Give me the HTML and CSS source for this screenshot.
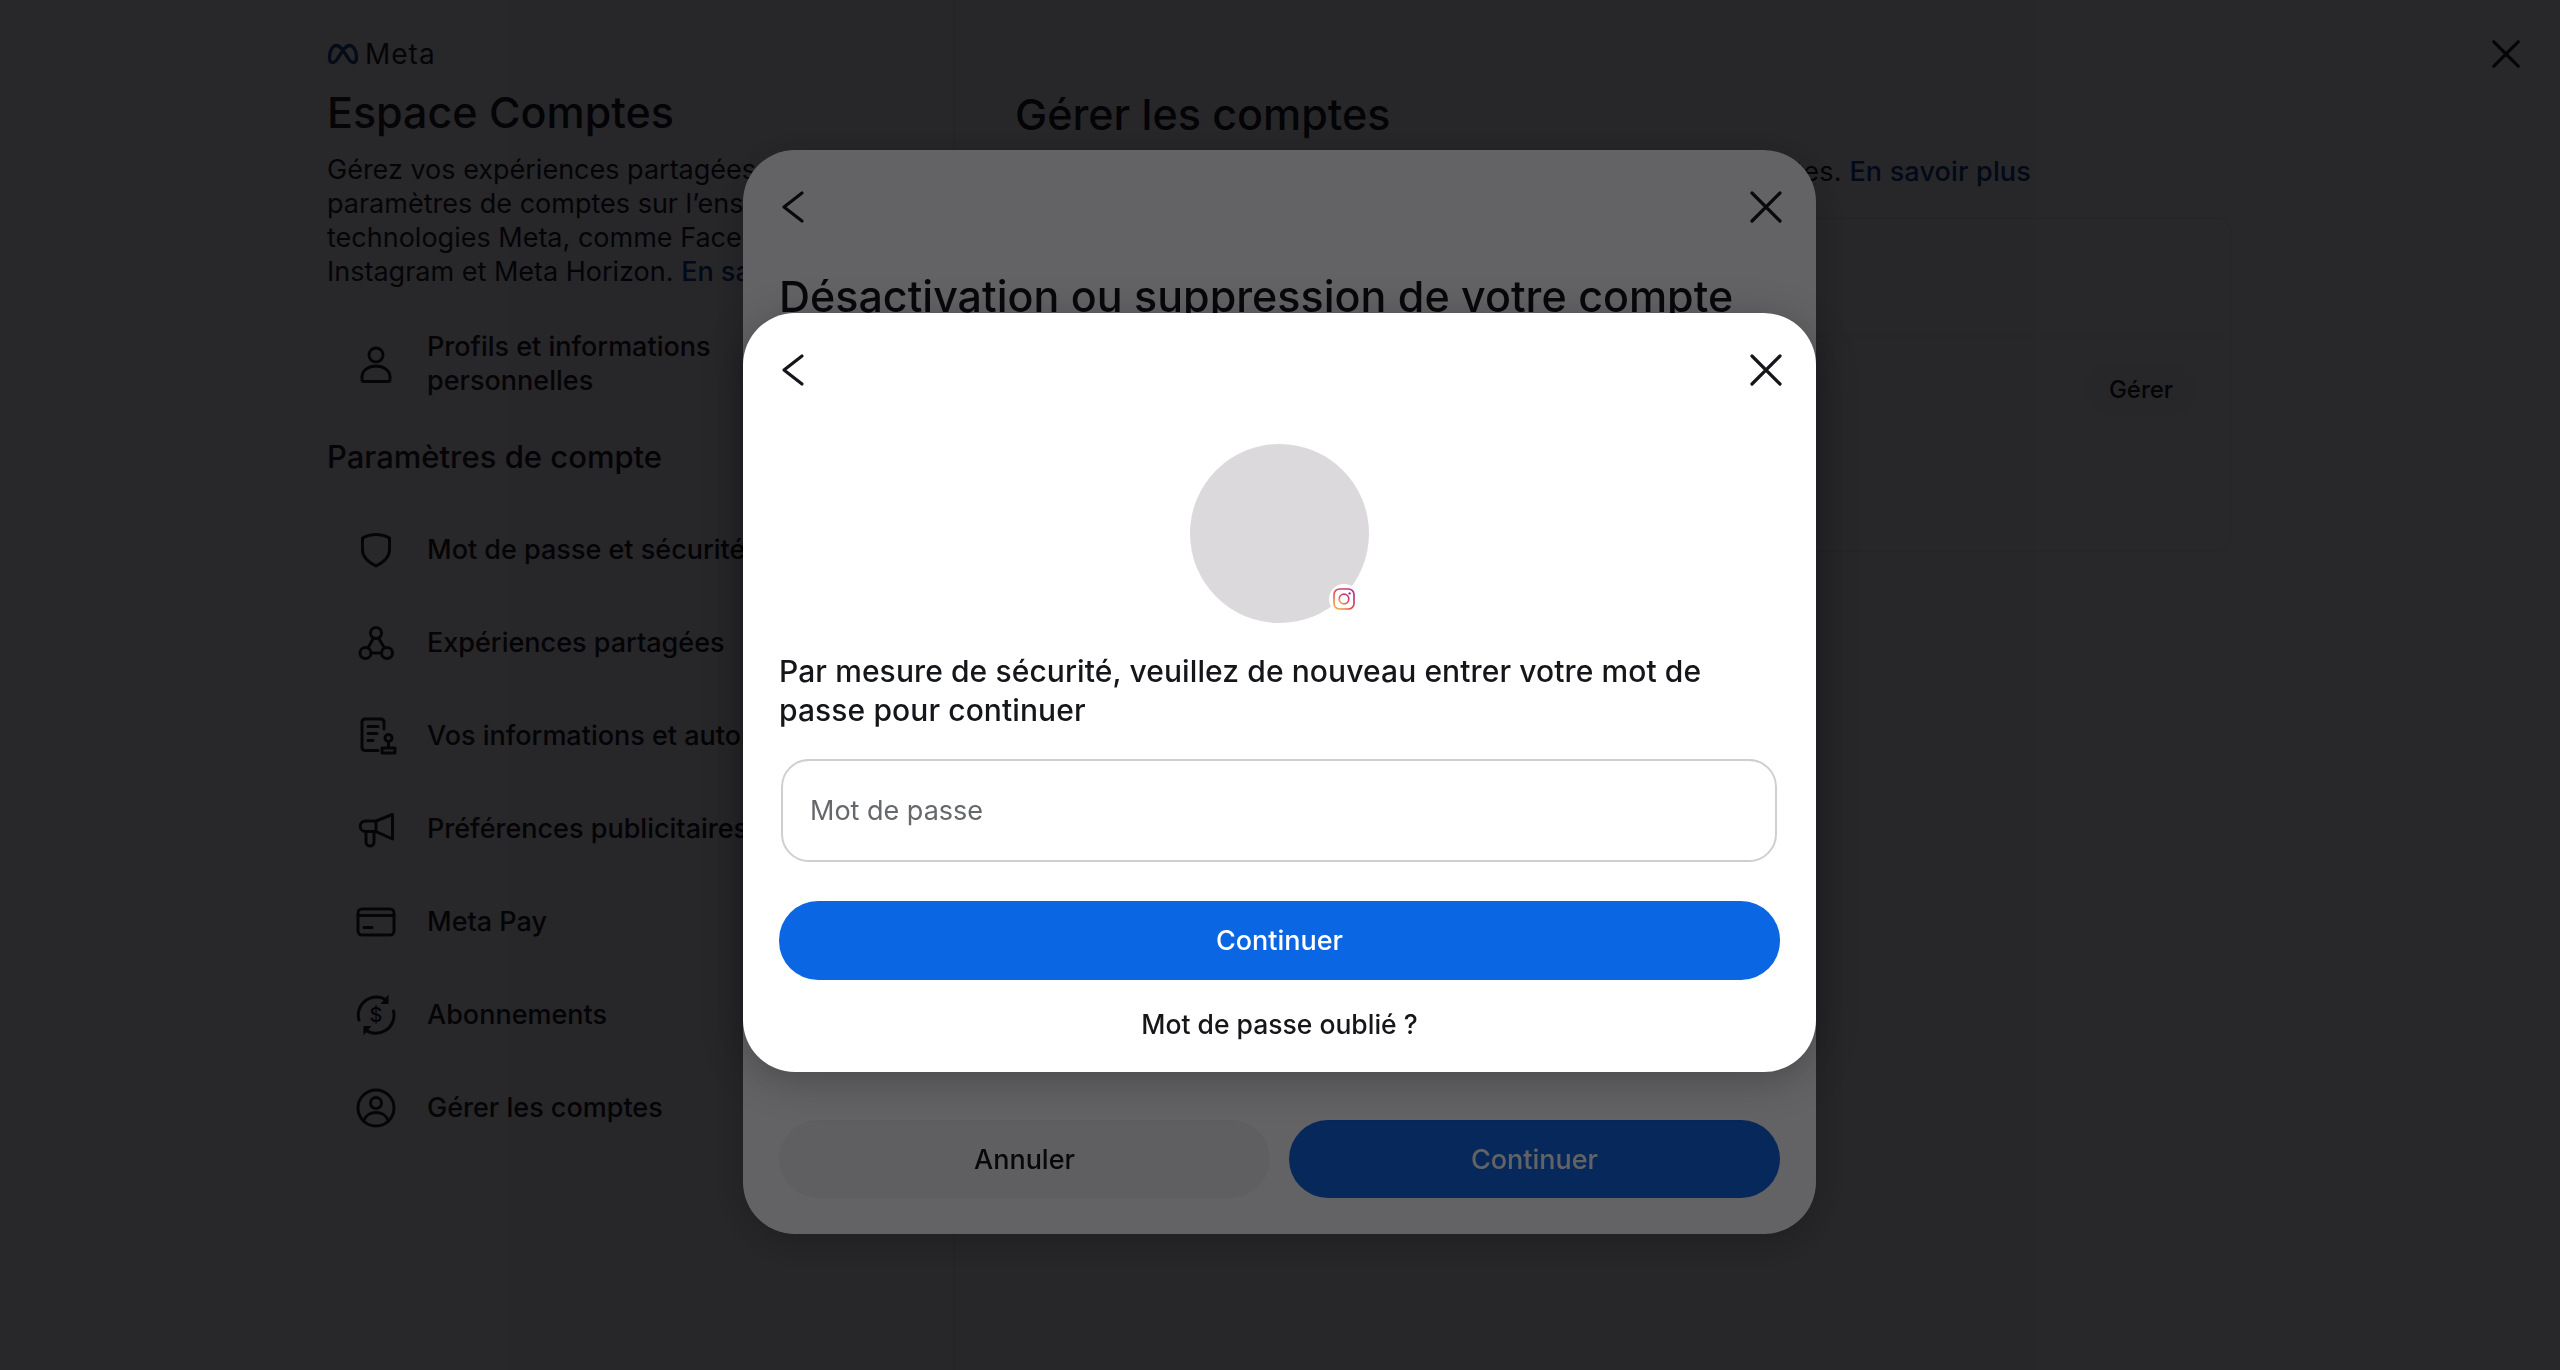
FILE: index.html
```html
<!DOCTYPE html>
<html lang="fr">
<head>
  <meta charset="UTF-8">
  <title>Espace Comptes</title>
  <link rel="stylesheet" href="styles.css">
</head>
<body>

  <div class="page">
    <aside class="sidebar">
      <div class="brand">
        <svg class="brand-mark" viewBox="0 0 32 22"><path d="M2.5 14.5C2.5 7 6 2.5 9.5 2.5 14 2.500 18 10 21 15c2 3.500 4 4.500 5.500 4.500 2.300 0 3-2.500 3-5.500 0-7-3.500-11.500-7-11.500C18 2.500 14 10 11 15c-2 3.500-4 4.500-5.500 4.500-2 0-3-2-3-5z"/></svg>
        <span class="brand-name">Meta</span>
      </div>
      <h1>Espace Comptes</h1>
      <p class="intro">Gérez vos expériences partagées et les paramètres de comptes sur l’ensemble des technologies Meta, comme Facebook, Instagram et Meta Horizon. <a href="#">En savoir plus</a></p>

      <a class="nav-item nav-item-wrap" href="#">
        <svg class="nav-icon" viewBox="0 0 44 44"><circle cx="22" cy="13" r="7"/><path d="M10 39.500a2 2 0 0 1-2-2V35c0-7 7-11 14-11s14 4 14 11v2.500a2 2 0 0 1-2 2z"/></svg>
        <span>Profils et informations personnelles</span>
      </a>

      <h2>Paramètres de compte</h2>

      <a class="nav-item" href="#">
        <svg class="nav-icon" viewBox="0 0 44 44"><path d="M8.500 10C13 7.500 17 6.500 22 6.500s9 1 13.500 3.500v12c0 7-5.500 12-13.500 16C14 34 8.500 29 8.500 22z"/></svg>
        <span>Mot de passe et sécurité</span>
      </a>
      <a class="nav-item" href="#">
        <svg class="nav-icon" viewBox="0 0 44 44"><circle cx="22" cy="12" r="5.500"/><circle cx="11.500" cy="32" r="5.500"/><circle cx="33" cy="32" r="5.500"/><path d="M19.500 17 14 27M24.500 17 30.500 27M17 32h10.500"/></svg>
        <span>Expériences partagées</span>
      </a>
      <a class="nav-item" href="#">
        <svg class="nav-icon" viewBox="0 0 44 44"><path d="M24 36.500H11a3 3 0 0 1-3-3V8a3 3 0 0 1 3-3h16a3 3 0 0 1 3 3v7M14 12.500h10M14 19.500h9M14 26.500h5"/><circle cx="34.500" cy="24" r="3.500"/><path d="M34.500 27.500V33M28 34h13v5H28z"/></svg>
        <span>Vos informations et autorisations</span>
      </a>
      <a class="nav-item" href="#">
        <svg class="nav-icon" viewBox="0 0 44 44"><path d="M38.500 7.500 22 14H11.500a5.300 5.300 0 0 0 0 10.600H22L38.500 32zM22 14v10.600M12 25v10a4 4 0 0 0 8 0V25"/></svg>
        <span>Préférences publicitaires</span>
      </a>
      <a class="nav-item" href="#">
        <svg class="nav-icon" viewBox="0 0 44 44"><rect x="4" y="9" width="36" height="26" rx="4"/><path d="M4 15.500h36M10 27.500h8"/></svg>
        <span>Meta Pay</span>
      </a>
      <a class="nav-item" href="#">
        <svg class="nav-icon" viewBox="0 0 44 44"><path d="M5 27A18 18 0 0 1 33 7.500M39.500 18A18 18 0 0 1 11 36.500"/><path class="solid" d="M34.500 1.500v9.500h-8zM9.500 42.500V33h8z"/><text x="22" y="29" text-anchor="middle">$</text></svg>
        <span>Abonnements</span>
      </a>
      <a class="nav-item" href="#">
        <svg class="nav-icon" viewBox="0 0 44 44"><circle cx="22" cy="22" r="18"/><circle cx="22" cy="17" r="5.500"/><path d="M9.500 35c2-6 7.500-8.500 12.500-8.500S32.500 29 34.500 35"/></svg>
        <span>Gérer les comptes</span>
      </a>
    </aside>

    <main class="content">
      <h1>Gérer les comptes</h1>
      <p class="intro">Gérez les profils de cet Espace Comptes et vos autres comptes. <a href="#">En savoir plus</a></p>
      <div class="account-card">
        <div class="account-row"></div>
        <div class="account-row">
          <button class="manage-btn">Gérer</button>
        </div>
      </div>
    </main>

    <button class="icon-btn page-close">
      <svg viewBox="0 0 32 32"><path d="M3 3l26 26M29 3 3 29"/></svg>
    </button>
  </div>

  <div class="overlay">
    <section class="modal modal-back">
      <header class="modal-head">
        <svg class="head-icon back-icon" viewBox="0 0 44 44"><path d="M25 8 7 22l18 14"/></svg>
        <svg class="head-icon close-icon" viewBox="0 0 44 44"><path d="M8 8l28 28M36 8 8 36"/></svg>
      </header>
      <h2 class="modal-title">Désactivation ou suppression de votre compte</h2>
      <div class="modal-body"></div>
      <div class="modal-actions">
        <button class="btn btn-muted">Annuler</button>
        <button class="btn btn-primary">Continuer</button>
      </div>
    </section>
  </div>

  <div class="overlay">
    <section class="modal">
      <header class="modal-head">
        <svg class="head-icon back-icon" viewBox="0 0 44 44"><path d="M25 8 7 22l18 14"/></svg>
        <svg class="head-icon close-icon" viewBox="0 0 44 44"><path d="M8 8l28 28M36 8 8 36"/></svg>
      </header>
      <div class="avatar">
        <span class="avatar-badge">
          <svg viewBox="0 0 24 24">
            <defs>
              <linearGradient id="ig" x1="0" y1="1" x2="1" y2="0">
                <stop offset="0" stop-color="#f9c04a"/>
                <stop offset="0.4" stop-color="#e8554e"/>
                <stop offset="1" stop-color="#b42a8c"/>
              </linearGradient>
            </defs>
            <rect x="2" y="2" width="20" height="20" rx="5.500"/>
            <circle cx="12" cy="12" r="4.800"/>
            <circle class="ig-dot" cx="17.600" cy="6.400" r="1.200"/>
          </svg>
        </span>
      </div>
      <p class="modal-text">Par mesure de sécurité, veuillez de nouveau entrer votre mot de passe pour continuer</p>
      <input class="password" type="password" placeholder="Mot de passe">
      <button class="btn btn-primary btn-wide">Continuer</button>
      <a class="forgot" href="#">Mot de passe oublié ?</a>
    </section>
  </div>

</body>
</html>
```

FILE: styles.css
```css
* {
  box-sizing: border-box;
}

body {
  margin: 0;
  height: 100vh;
  overflow: hidden;
  background-color: white;
  color: #111114;
  font-family: Inter, "Noto Sans", sans-serif;
}

a {
  color: inherit;
  text-decoration: none;
}

button {
  font-family: inherit;
  border: none;
}

.page {
  display: flex;
  height: 100vh;
}

.sidebar {
  width: 955px;
  padding: 43px 0 0 327px;
  border-right: 2px solid #eeeeee;
  overflow: hidden;
}

.brand {
  display: flex;
  align-items: center;
  gap: 6px;
  height: 22px;
}

.brand-mark {
  width: 32px;
  height: 22px;
  fill: none;
  stroke: #0a4a90;
  stroke-width: 3.4;
}

.brand-name {
  font-size: 28px;
  line-height: 22px;
  letter-spacing: 1px;
}

.sidebar h1,
.content h1 {
  margin: 22px 0 0;
  font-size: 43px;
  line-height: 50px;
  font-weight: 500;
}

.intro {
  margin: 16px 0 0;
  width: 570px;
  font-size: 27px;
  line-height: 34px;
}

.intro a {
  color: #003a8a;
  font-weight: 500;
}

.sidebar .intro {
  margin-bottom: 28.500px;
}

.sidebar h2 {
  margin: 28.500px 0;
  font-size: 31px;
  line-height: 36px;
  font-weight: 500;
}

.nav-item {
  display: flex;
  align-items: center;
  gap: 29px;
  height: 93px;
  padding-left: 27px;
  font-size: 27px;
  line-height: 34px;
  font-weight: 500;
  white-space: nowrap;
}

.nav-item-wrap {
  white-space: normal;
}

.nav-item-wrap span {
  width: 340px;
}

.nav-icon {
  flex: none;
  width: 44px;
  height: 44px;
  fill: none;
  stroke: #111114;
  stroke-width: 3;
  stroke-linecap: round;
  stroke-linejoin: round;
}

.nav-icon .solid {
  fill: #111114;
  stroke: none;
}

.nav-icon text {
  fill: #111114;
  stroke: none;
  font-size: 20px;
  font-weight: 500;
}

.content {
  flex: 1;
  padding: 43px 328px 0 60px;
}

.content h1 {
  margin-top: 45.500px;
}

.content .intro {
  width: 1200px;
  margin-top: 16px;
  letter-spacing: 0.170px;
}

.account-card {
  margin-top: 28px;
  border: 2px solid #efefef;
  border-radius: 16px;
  height: 335px;
}

.account-row {
  display: flex;
  align-items: center;
  justify-content: flex-end;
  height: 118px;
  padding-right: 33px;
  border-bottom: 2px solid #efefef;
}

.account-row:last-child {
  border-bottom: none;
  height: 105px;
}

.manage-btn {
  width: 112px;
  height: 54px;
  border-radius: 27px;
  background-color: #f5f5f5;
  font-size: 24px;
  font-weight: 500;
  color: #111114;
}

.icon-btn {
  position: absolute;
  top: 39px;
  right: 39px;
  width: 30px;
  height: 30px;
  padding: 0;
  background: none;
}

.icon-btn svg {
  display: block;
  width: 30px;
  height: 30px;
  fill: none;
  stroke: #111114;
  stroke-width: 3.500;
  stroke-linecap: round;
}

.overlay {
  position: fixed;
  top: 0;
  right: 0;
  bottom: 0;
  left: 0;
  display: flex;
  align-items: center;
  justify-content: center;
  padding: 14px 1px 0 0;
  background-color: rgba(3, 2, 5, 0.62);
}

.modal {
  width: 1073px;
  padding: 35px 36px 0;
  border-radius: 52px;
  background-color: white;
  box-shadow: 0 8px 40px rgba(0, 0, 0, 0.25);
}

.modal-head {
  display: flex;
  justify-content: space-between;
  height: 44px;
}

.head-icon {
  width: 44px;
  height: 44px;
  fill: none;
  stroke: #14161a;
  stroke-width: 3.200;
  stroke-linecap: round;
  stroke-linejoin: round;
}

.back-icon {
  transform: translateX(-2px);
}

.close-icon {
  transform: translateX(8px);
}

.modal-title {
  margin: 42px 0 0;
  font-size: 43px;
  line-height: 50px;
  font-weight: 500;
}

.modal-body {
  height: 799px;
}

.modal-actions {
  display: flex;
  gap: 19px;
  padding-bottom: 36px;
}

.btn {
  flex: 1;
  height: 78px;
  border-radius: 39px;
  font-size: 27px;
  font-weight: 500;
}

.btn-muted {
  background-color: #f4f4f5;
  color: #111114;
}

.btn-primary {
  background-color: #0b66e4;
  color: white;
}

.btn-wide {
  display: block;
  width: 100%;
  height: 79px;
  margin-top: 39px;
}

.avatar {
  position: relative;
  width: 179px;
  height: 179px;
  margin: 52.500px auto 0;
  border-radius: 50%;
  background-color: #dcd9dd;
}

.avatar-badge {
  position: absolute;
  right: 10px;
  bottom: 9px;
  width: 30px;
  height: 30px;
  padding: 3px;
  border-radius: 50%;
  background-color: white;
}

.avatar-badge svg {
  display: block;
  width: 24px;
  height: 24px;
  fill: none;
  stroke: url(#ig);
  stroke-width: 1.700;
}

.avatar-badge .ig-dot {
  fill: #b42a8c;
  stroke: none;
}

.modal-text {
  margin: 29px 0 0;
  font-size: 30px;
  line-height: 39px;
  font-weight: 500;
  letter-spacing: 0.100px;
  color: #14161a;
}

.password {
  display: block;
  width: 996px;
  height: 103px;
  margin: 29px 2px 0;
  padding: 0 27px;
  border: 2px solid #cfced1;
  border-radius: 28px;
  font-family: inherit;
  font-size: 27px;
  outline: none;
}

.password::placeholder {
  color: #65686c;
}

.forgot {
  display: block;
  margin-top: 26px;
  padding-bottom: 29.500px;
  text-align: center;
  font-size: 26.500px;
  line-height: 36px;
  font-weight: 500;
  color: #14161a;
}
```
